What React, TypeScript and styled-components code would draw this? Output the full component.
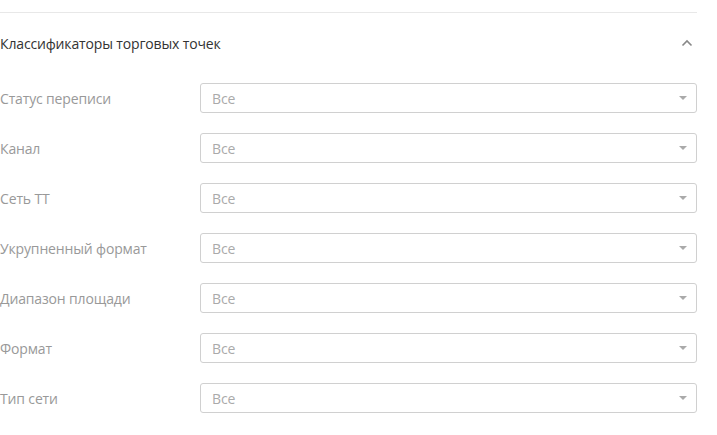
import React from "react";
import styled, { createGlobalStyle } from "styled-components";

const Global = createGlobalStyle`
  html, body { margin: 0; padding: 0; background: #fff; }
  body { font-family: "Open Sans", "Noto Sans", Arial, sans-serif; }
`;

const Panel = styled.section`
  width: 697px;
  padding-top: 12px;
`;

const Divider = styled.div`
  height: 1px;
  background: #e8e8e8;
`;

const Header = styled.div`
  height: 60px;
  display: flex;
  align-items: center;
  justify-content: space-between;
`;

const Title = styled.span`
  font-size: 14px;
  color: #333;
  letter-spacing: -0.15px;
`;

const Toggle = styled.span`
  display: flex;
  width: 14px;
  height: 10px;
  margin-right: 3px;
  align-items: center;
  justify-content: center;
`;

const List = styled.div`
  display: flex;
  flex-direction: column;
  gap: 20px;
  padding-top: 10px;
`;

const Row = styled.div`
  display: grid;
  grid-template-columns: 200px 1fr;
  align-items: center;
`;

const Label = styled.span`
  font-size: 14px;
  color: #999;
  letter-spacing: -0.15px;
`;

const Select = styled.div`
  height: 30px;
  box-sizing: border-box;
  border: 1px solid #d0d0d0;
  border-radius: 3px;
  display: flex;
  align-items: center;
  justify-content: space-between;
  padding: 0 9px 0 11px;
`;

const Value = styled.span`
  font-size: 14px;
  color: #aaa;
  letter-spacing: -0.15px;
`;

const Caret = styled.span`
  width: 0;
  height: 0;
  border-left: 4.5px solid transparent;
  border-right: 4.5px solid transparent;
  border-top: 4px solid #aaa;
`;

const fields = [
  "Статус переписи",
  "Канал",
  "Сеть ТТ",
  "Укрупненный формат",
  "Диапазон площади",
  "Формат",
  "Тип сети",
];

export default function App() {
  return (
    <>
      <Global />
      <Panel>
        <Divider />
        <Header>
          <Title>Классификаторы торговых точек</Title>
          <Toggle>
            <svg width="12" height="8" viewBox="0 0 12 8">
              <path d="M1.5 6.5 L6 2 L10.5 6.5" fill="none" stroke="#888" strokeWidth="1.6" />
            </svg>
          </Toggle>
        </Header>
        <List>
          {fields.map((f) => (
            <Row key={f}>
              <Label>{f}</Label>
              <Select>
                <Value>Все</Value>
                <Caret />
              </Select>
            </Row>
          ))}
        </List>
      </Panel>
    </>
  );
}
